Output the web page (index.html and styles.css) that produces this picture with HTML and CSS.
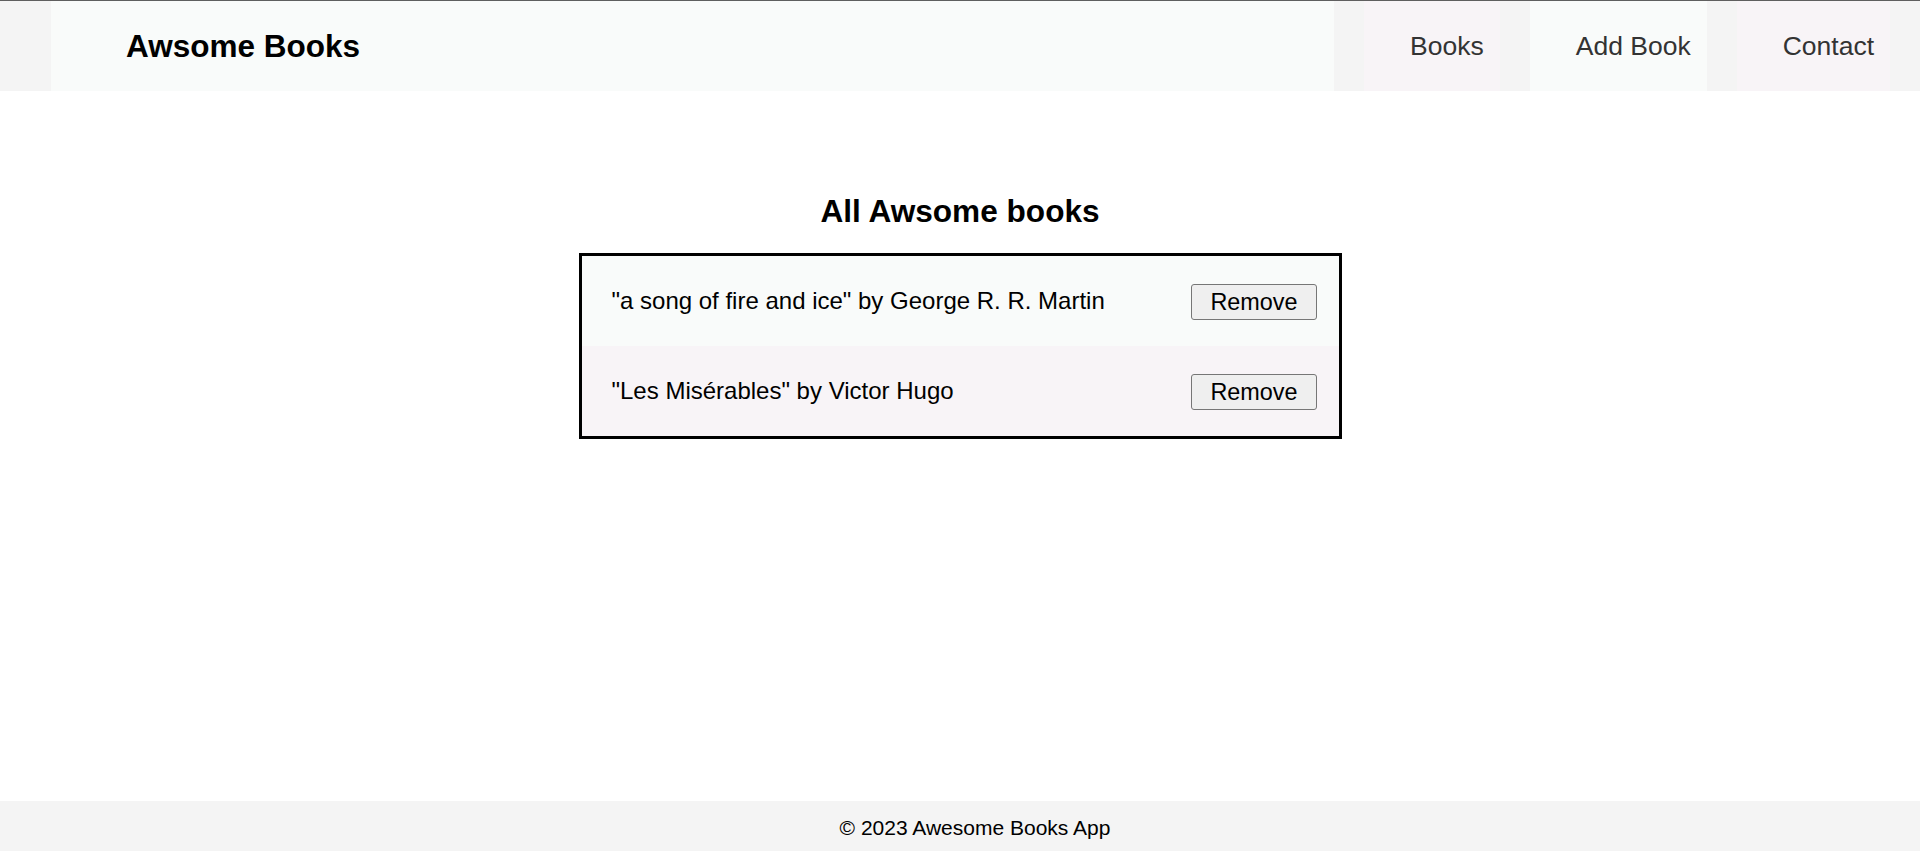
FILE: index.html
```html
<!DOCTYPE html>
<html lang="en">
<head>
<meta charset="utf-8">
<title>Awsome Books</title>
<link rel="stylesheet" href="styles.css">
</head>
<body>
<header class="site-header">
  <div class="brand">
    <h1 class="brand-title">Awsome Books</h1>
  </div>
  <nav class="nav">
    <ul class="nav-list">
      <li class="nav-item nav-item-pink"><a class="nav-link" href="#">Books</a></li>
      <li class="nav-item nav-item-light"><a class="nav-link" href="#">Add Book</a></li>
      <li class="nav-item nav-item-pink"><a class="nav-link" href="#">Contact</a></li>
    </ul>
  </nav>
</header>
<main class="main">
  <h2 class="section-title">All Awsome books</h2>
  <ul class="book-list">
    <li class="book-row book-row-light">
      <p class="book-text">"a song of fire and ice" by George R. R. Martin</p>
      <button class="remove-btn" type="button">Remove</button>
    </li>
    <li class="book-row book-row-pink">
      <p class="book-text">"Les Misérables" by Victor Hugo</p>
      <button class="remove-btn" type="button">Remove</button>
    </li>
  </ul>
</main>
<footer class="site-footer">
  <p class="footer-text">© 2023 Awesome Books App</p>
</footer>
</body>
</html>
```
FILE: styles.css
```css
* {
  box-sizing: border-box;
}

html, body {
  margin: 0;
  padding: 0;
}

body {
  min-height: 100vh;
  display: flex;
  flex-direction: column;
  font-family: "Liberation Sans", Arial, sans-serif;
  color: #000;
  background: #fff;
}

.site-header {
  display: flex;
  height: 91px;
  border-top: 1px solid #5f5f5f;
  background: #f4f4f4;
  padding-left: 51px;
}

.brand {
  flex: 1;
  display: flex;
  align-items: center;
  background: #f9fbfa;
  padding-left: 75px;
}

.brand-title {
  margin: 0;
  font-size: 31.5px;
  font-weight: bold;
  color: #000;
}

.nav {
  display: flex;
}

.nav-list {
  display: flex;
  gap: 30px;
  list-style: none;
  margin: 0;
  padding: 0 30px;
}

.nav-item {
  display: flex;
  align-items: center;
  padding: 0 16px 0 46px;
}

.nav-item-pink {
  background: #f8f4f7;
}

.nav-item-light {
  background: #f9fbfa;
}

.nav-link {
  font-size: 26.5px;
  color: #333;
  text-decoration: none;
}

.main {
  flex: 1;
  display: flex;
  flex-direction: column;
  align-items: center;
  padding-top: 102px;
}

.section-title {
  margin: 0 0 23px;
  font-size: 31.6px;
  font-weight: bold;
}

.book-list {
  list-style: none;
  margin: 0;
  padding: 0;
  width: 763px;
  border: 3px solid #000;
}

.book-row {
  display: flex;
  align-items: center;
  justify-content: space-between;
  height: 90px;
  padding: 0 22px 0 30px;
}

.book-row-light {
  background: #f9fbfa;
}

.book-row-pink {
  background: #f8f4f7;
}

.book-text {
  margin: 0;
  font-size: 24px;
}

.remove-btn {
  font-family: "Liberation Sans", Arial, sans-serif;
  font-size: 23.4px;
  color: #000;
  background: #efefef;
  border: 1px solid #767676;
  border-radius: 3px;
  padding: 3.5px 18px;
  margin-top: 2px;
}

.site-footer {
  height: 50px;
  background: #f4f4f4;
  padding: 15px 0 0 30px;
}

.footer-text {
  margin: 0;
  text-align: center;
  font-size: 21px;
}
```
